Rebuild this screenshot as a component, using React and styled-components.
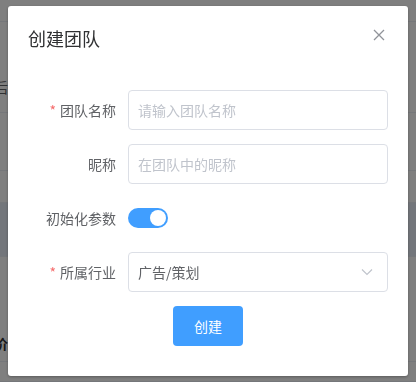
import React from 'react';
import styled, { createGlobalStyle } from 'styled-components';

const GlobalStyle = createGlobalStyle`
  html, body {
    margin: 0;
    padding: 0;
    background: #fff;
    font-family: "Noto Sans CJK SC", "Noto Sans", sans-serif;
  }
`;

const rows = [
  { h: 22, text: '' },
  { h: 91, text: '后台', top: 55 },
  { h: 58, text: '' },
  { h: 32, text: '' },
  { h: 54, text: '', hover: true },
  { h: 105, text: '价格', top: 76, bold: true },
  { h: 20, text: '' },
];

const Page = styled.div`
  width: 416px;
  height: 382px;
  overflow: hidden;
`;

const BgRow = styled.div`
  box-sizing: border-box;
  height: ${p => p.$h}px;
  padding-top: ${p => p.$top || 0}px;
  border-bottom: 1px solid #ebeef5;
  background: ${p => (p.$hover ? '#e6ecf7' : '#fff')};
  font-size: 14px;
  line-height: 20px;
  color: ${p => (p.$bold ? '#303133' : '#606266')};
  font-weight: ${p => (p.$bold ? 700 : 400)};
  text-indent: -6px;
`;

const Mask = styled.div`
  position: fixed;
  inset: 0;
  background: rgba(0, 0, 0, 0.5);
`;

const Dialog = styled.div`
  position: fixed;
  top: 6px;
  left: 8px;
  width: 400px;
  box-sizing: border-box;
  background: #fff;
  border-radius: 3px;
  box-shadow: 0 1px 3px rgba(0, 0, 0, 0.3);
`;

const Header = styled.div`
  position: relative;
  padding: 20px 20px 10px;
`;

const Title = styled.div`
  font-size: 18px;
  line-height: 24px;
  height: 24px;
  color: #303133;
`;

const Close = styled.button`
  position: absolute;
  top: 22px;
  right: 22px;
  width: 14px;
  height: 14px;
  padding: 0;
  border: none;
  background: transparent;
  display: flex;
  align-items: center;
  justify-content: center;
`;

const Body = styled.div`
  padding: 30px 20px;
  display: flex;
  flex-direction: column;
  gap: 14px;
`;

const Item = styled.div`
  display: flex;
  align-items: center;
  height: 40px;
`;

const Label = styled.label`
  width: 100px;
  box-sizing: border-box;
  padding-right: 12px;
  text-align: right;
  font-size: 14px;
  color: #606266;
  line-height: 40px;

  &::before {
    content: ${p => (p.$required ? '"*"' : 'none')};
    color: #f56c6c;
    margin-right: 4px;
  }
`;

const Input = styled.input`
  flex: 1;
  height: 40px;
  box-sizing: border-box;
  border: 1px solid #dcdfe6;
  border-radius: 4px;
  padding: 0 15px 0 9px;
  font-family: inherit;
  font-size: 14px;
  color: #606266;
  outline: none;

  &::placeholder {
    color: #c0c4cc;
  }
`;

const Select = styled.div`
  flex: 1;
  height: 40px;
  box-sizing: border-box;
  border: 1px solid #dcdfe6;
  border-radius: 4px;
  padding: 0 14px 0 9px;
  display: flex;
  align-items: center;
  justify-content: space-between;
  font-size: 14px;
  color: #606266;
`;

const Switch = styled.div`
  width: 40px;
  height: 20px;
  border-radius: 10px;
  background: #409eff;
  position: relative;

  &::after {
    content: '';
    position: absolute;
    top: 2px;
    right: 2px;
    width: 16px;
    height: 16px;
    border-radius: 50%;
    background: #fff;
  }
`;

const Footer = styled.div`
  display: flex;
  justify-content: center;
`;

const Button = styled.button`
  width: 70px;
  height: 40px;
  border: none;
  border-radius: 4px;
  background: #409eff;
  color: #fff;
  font-family: inherit;
  font-size: 14px;
`;

export default function App() {
  return (
    <>
      <GlobalStyle />
      <Page>
        {rows.map((r, i) => (
          <BgRow key={i} $h={r.h} $top={r.top} $hover={r.hover} $bold={r.bold}>
            {r.text}
          </BgRow>
        ))}
      </Page>
      <Mask />
      <Dialog>
        <Header>
          <Title>创建团队</Title>
          <Close aria-label="close">
            <svg width="12" height="12" viewBox="0 0 12 12">
              <path d="M1 1L11 11M11 1L1 11" stroke="#909399" strokeWidth="1.3" fill="none" />
            </svg>
          </Close>
        </Header>
        <Body>
          <Item>
            <Label $required>团队名称</Label>
            <Input placeholder="请输入团队名称" />
          </Item>
          <Item>
            <Label>昵称</Label>
            <Input placeholder="在团队中的昵称" />
          </Item>
          <Item>
            <Label>初始化参数</Label>
            <Switch />
          </Item>
          <Item>
            <Label $required>所属行业</Label>
            <Select>
              <span>广告/策划</span>
              <svg width="12" height="8" viewBox="0 0 12 8">
                <path d="M1 1.5L6 6.5L11 1.5" stroke="#c0c4cc" strokeWidth="1.2" fill="none" />
              </svg>
            </Select>
          </Item>
          <Footer>
            <Button>创建</Button>
          </Footer>
        </Body>
      </Dialog>
    </>
  );
}
